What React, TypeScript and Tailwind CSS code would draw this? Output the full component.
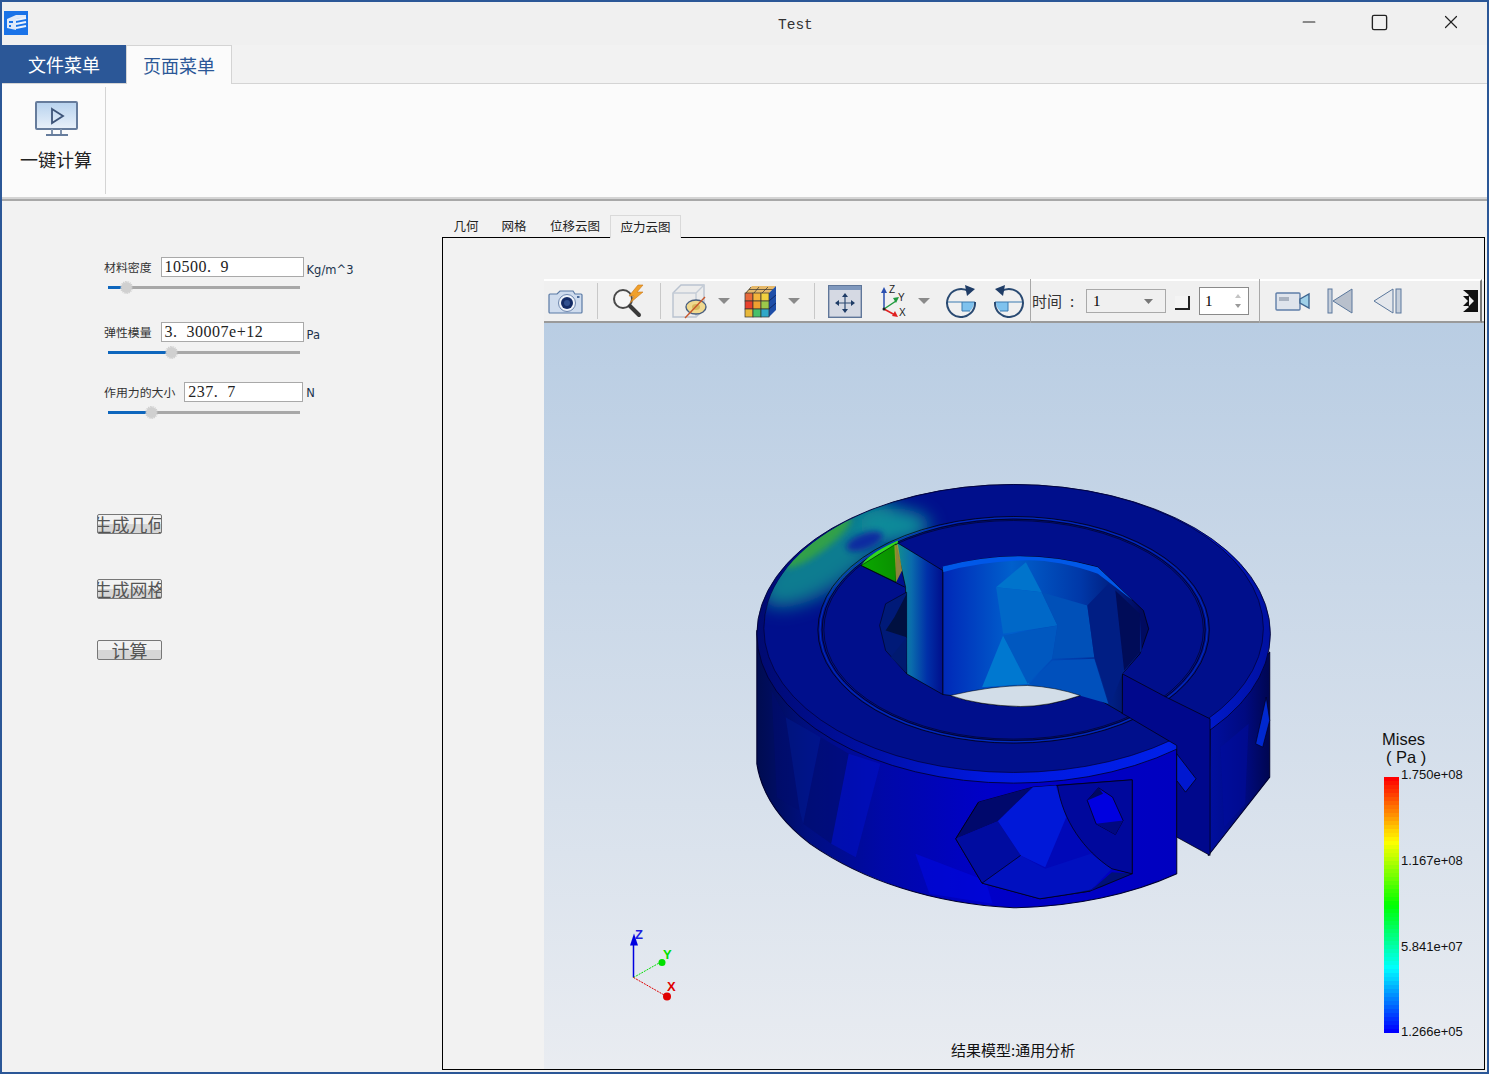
import { ReactNode } from "react";
import { Minus, Square, X } from "lucide-react";

const cjk = "font-['Noto_Sans_CJK_SC','Liberation_Sans',sans-serif]";
const serif = "font-['Liberation_Serif',serif]";

const Slider = ({ pos }: { pos: number }) => (
  <div className="relative ml-[4px] h-[3px] w-[192px] bg-[#a8a8a8]">
    <div className="absolute left-0 top-0 h-[3px] bg-[#0e66bd]" style={{ width: pos }} />
    <div
      className="absolute top-[-4px] h-[11px] w-[11px] rounded-full bg-[#d0d0d0] outline-1 outline-dotted outline-[#c4c4c4]"
      style={{ left: pos - 5 }}
    />
  </div>
);

const Param = ({
  label,
  value,
  unit,
  pos,
  inputWidth,
  gap,
  unitTop,
}: {
  label: string;
  value: string;
  unit: string;
  pos: number;
  inputWidth: string;
  gap: string;
  unitTop: string;
}) => (
  <div>
    <div className="flex h-[20px] items-center">
      <span className={`${cjk} text-[11.9px] text-[#333] whitespace-nowrap`}>{label}</span>
      <div
        className={`${inputWidth} ${gap} flex h-[20px] shrink-0 items-center border border-[#a9a9a9] bg-white pl-[3px] ${serif} text-[16px] tracking-[0.5px] whitespace-pre text-[#222]`}
      >
        {value}
      </div>
      <span className={`${unitTop} relative ml-[3px] font-['DejaVu_Sans',sans-serif] text-[11.5px] text-[#20324c]`}>
        {unit}
      </span>
    </div>
    <div className="mt-[9px]">
      <Slider pos={pos} />
    </div>
  </div>
);

const OldButton = ({ text, className }: { text: string; className: string }) => (
  <div
    className={`${className} ${cjk} flex h-[20px] w-[65px] items-center justify-center overflow-hidden rounded-[2px] border border-[#777] bg-[linear-gradient(#f2f2f2_50%,#d6d6d6_50%)] text-[18px] leading-[18px] whitespace-nowrap text-[#555]`}
  >
    {text}
  </div>
);

const Caret = ({ className = "" }: { className?: string }) => (
  <svg width="12" height="7" viewBox="0 0 12 7" className={className}>
    <path d="M0 0H12L6 6Z" fill="#8a8a8a" />
  </svg>
);

const Sep = ({ className }: { className: string }) => <div className={`${className} h-[36px] w-px bg-[#c8c8c8]`} />;

const CameraIcon = () => (
  <svg width="36" height="28" viewBox="0 0 36 28">
    <path d="M2 7h7l3-3h13l2 3h6a1 1 0 0 1 1 1v17a1 1 0 0 1-1 1H2a1 1 0 0 1-1-1V8a1 1 0 0 1 1-1z" fill="#cfdcee" stroke="#5a7aa5" strokeWidth="1.2" />
    <circle cx="19" cy="16" r="8.5" fill="#eef3fa" stroke="#6d86ad" />
    <circle cx="19" cy="16" r="6" fill="#142c66" />
    <circle cx="19" cy="16" r="3" fill="#30508f" />
    <rect x="29" y="9" width="2.5" height="2" fill="#4a6a9a" />
  </svg>
);

const SearchBoltIcon = () => (
  <svg width="36" height="34" viewBox="0 0 36 34">
    <circle cx="13" cy="15" r="9" fill="#f6f6f6" stroke="#4a4a4a" strokeWidth="2" />
    <path d="M20 22l9 9" stroke="#3a3a3a" strokeWidth="4" strokeLinecap="round" />
    <path d="M28 1l-9 11h5l-4 7 13-11h-6l6-7z" fill="#f0a02c" stroke="#c9781c" strokeWidth=".6" />
  </svg>
);

const CubeEyeIcon = () => (
  <svg width="36" height="36" viewBox="0 0 36 36">
    <path d="M2 10L10 2h23v24l-8 8H2z" fill="#ececec" stroke="#b9c2cf" strokeWidth="1.4" />
    <path d="M2 10h23v24M25 10l8-8" fill="none" stroke="#c4ccd6" strokeWidth="1.4" />
    <ellipse cx="25" cy="24" rx="10" ry="7" fill="#f0d98e" stroke="#4a5f7f" strokeWidth="1.4" />
    <ellipse cx="25" cy="24" rx="4" ry="3" fill="#d7b85c" />
    <path d="M14 35L34 14" stroke="#c8562a" strokeWidth="1.4" />
  </svg>
);

const ColorCubeIcon = () => {
  const front = ["#e86a3a", "#f4b33c", "#f0d040", "#e8402c", "#f0a030", "#9cc84a", "#e8b83a", "#48c06a", "#30a8c8"];
  return (
    <svg width="34" height="34" viewBox="0 0 34 34">
      <path d="M8 2h24l-7 7H1z" fill="#e6b96a" />
      <path d="M7 3l-5 6M15 3l-5 6M24 3l-6 6M5 5.500h24" stroke="#333" strokeWidth=".7" />
      <path d="M25 9l7-7v24l-7 7z" fill="#1e4ea8" />
      <path d="M25 17l7-6M25 25l7-6" stroke="#0e2a66" />
      {front.map((c, i) => (
        <rect key={i} x={1 + (i % 3) * 8} y={9 + Math.floor(i / 3) * 8} width="8" height="8" fill={c} stroke="#333" strokeWidth=".7" />
      ))}
    </svg>
  );
};

const FitIcon = () => (
  <svg width="34" height="33" viewBox="0 0 34 33">
    <rect x=".7" y=".7" width="32.600" height="31.600" fill="#d5d9e3" stroke="#5f7699" strokeWidth="1.4" />
    <rect x="1" y="1" width="32" height="4" fill="#7f98bd" />
    <path d="M17 10v16M9 18h16" stroke="#2c4a72" strokeWidth="1.200" />
    <path d="M17 8l-3 4h6zM17 28l-3-4h6zM7 18l4-3v6zM27 18l-4-3v6z" fill="#1f3c66" />
  </svg>
);

const AxesIcon = () => (
  <svg width="30" height="36" viewBox="0 0 30 36">
    <path d="M6 26V8" stroke="#2a4fb0" strokeWidth="1.500" />
    <path d="M6 4l-3 6h6z" fill="#2a4fb0" />
    <path d="M6 26l12-8" stroke="#1f9a3e" strokeWidth="1.500" />
    <path d="M21 14l-6 1 3 5z" fill="#1f9a3e" />
    <path d="M6 26l11 6" stroke="#e02020" strokeWidth="1.500" />
    <path d="M20 34l-6-1 3-5z" fill="#e02020" />
    <circle cx="6" cy="26" r="1.500" fill="#222" />
    <text x="11" y="10" fontSize="10" fontFamily="Liberation Sans" fill="#222">Z</text>
    <text x="20" y="18" fontSize="10" fontFamily="Liberation Sans" fill="#222">Y</text>
    <text x="21" y="33" fontSize="10" fontFamily="Liberation Sans" fill="#222">X</text>
  </svg>
);

const RotateIcon = ({ flip }: { flip?: boolean }) => (
  <svg width="32" height="34" viewBox="0 0 32 34" className={flip ? "-scale-x-100" : ""}>
    <path d="M17 18h12a12 12 0 0 1-4 9h-8z" fill="#7fc2ee" />
    <path d="M2 18h28M17 18v9h8" fill="none" stroke="#3a7ab0" />
    <path d="M24 7.500A14 14 0 1 0 30 18" fill="none" stroke="#2a4a72" strokeWidth="2" />
    <path d="M20 1l10 4-8 7z" fill="#1f3c66" />
  </svg>
);

const VideoIcon = () => (
  <svg width="36" height="20" viewBox="0 0 36 20">
    <rect x="1" y="2" width="24" height="17" rx="1" fill="#dfe4ec" stroke="#5f7ea8" strokeWidth="1.4" />
    <rect x="4" y="6" width="10" height="4" fill="#a9b2c0" />
    <path d="M25 8l9-5v14l-9-5z" fill="#9fd0e8" stroke="#3d6590" strokeWidth="1.4" />
  </svg>
);

const SkipBackIcon = () => (
  <svg width="26" height="26" viewBox="0 0 26 26">
    <rect x="1" y="1" width="4" height="24" fill="#c6cfdb" stroke="#5a779c" />
    <path d="M25 1v24L6 13z" fill="#b8c0cc" stroke="#5a779c" />
  </svg>
);

const StepBackIcon = () => (
  <svg width="29" height="26" viewBox="0 0 29 26">
    <path d="M20 1v24L1 13z" fill="#e4e7ec" stroke="#5a779c" />
    <rect x="23" y="1" width="5" height="24" fill="#c6cfdb" stroke="#5a779c" />
  </svg>
);

const IconSlot = ({ width, children }: { width: string; children: ReactNode }) => (
  <div className={`${width} flex shrink-0 items-center justify-center`}>{children}</div>
);

const Toolbar = () => (
  <div className="flex h-[44px] items-center border-t-2 border-b-2 border-t-white border-b-[#9a9a9a] bg-[#f0f0f0]">
    <IconSlot width="w-[44px]"><CameraIcon /></IconSlot>
    <Sep className="ml-[9px]" />
    <IconSlot width="w-[60px]"><SearchBoltIcon /></IconSlot>
    <Sep className="ml-[2px]" />
    <IconSlot width="w-[44px] ml-[6px]"><CubeEyeIcon /></IconSlot>
    <Caret className="ml-[7px]" />
    <IconSlot width="w-[36px] ml-[13px]"><ColorCubeIcon /></IconSlot>
    <Caret className="ml-[9px]" />
    <Sep className="ml-[14px]" />
    <IconSlot width="w-[36px] ml-[12px]"><FitIcon /></IconSlot>
    <IconSlot width="w-[36px] ml-[12px]"><AxesIcon /></IconSlot>
    <Caret className="ml-[7px]" />
    <IconSlot width="w-[32px] ml-[15px]"><RotateIcon /></IconSlot>
    <IconSlot width="w-[32px] ml-[16px]"><RotateIcon flip /></IconSlot>
    <div className="ml-[5px] h-[44px] w-px bg-[#a8a8a8]" />
    <span className={`${cjk} ml-[1px] w-[54px] text-[15px] text-[#333]`}>
      时间<span className="ml-[8px]">:</span>
    </span>
    <div className={`${serif} flex h-[24px] w-[80px] items-center justify-between border border-[#a9a9a9] pl-[6px] pr-[12px] text-[15px]`}>
      1
      <svg width="9" height="5" viewBox="0 0 9 5"><path d="M0 0H9L4.500 5Z" fill="#777" /></svg>
    </div>
    <div className="ml-[9px] mt-[4px] h-[14px] w-[15px] border-r-2 border-b-2 border-r-[#222] border-b-[#222] bg-[#f4f4f4]" />
    <div className={`${serif} ml-[9px] flex h-[28px] w-[50px] items-center justify-between border border-[#8a8a8a] bg-white pl-[5px] pr-[6px] text-[15px]`}>
      1
      <svg width="8" height="16" viewBox="0 0 8 16"><path d="M4 1l3 4H1z" fill="#c4c4c4" /><path d="M4 15l3-4H1z" fill="#9a9a9a" /></svg>
    </div>
    <div className="ml-[10px] h-[44px] w-px bg-[#a8a8a8]" />
    <div className="ml-[10px] flex h-[44px] w-[212px] items-center border-t-2 border-r-2 border-b-2 border-t-white border-r-[#777] border-b-[#9a9a9a]">
      <IconSlot width="w-[36px] ml-[5px]"><VideoIcon /></IconSlot>
      <IconSlot width="w-[26px] ml-[16px]"><SkipBackIcon /></IconSlot>
      <IconSlot width="w-[29px] ml-[20px]"><StepBackIcon /></IconSlot>
      <svg width="15" height="22" viewBox="0 0 15 22" className="ml-[61px]">
        <path d="M0 0h15v22H0l6-5-1-1H0l5-5-5-5h5l1-1z" fill="#111" />
        <path d="M6 6l5 5-5 5z" fill="#eee" />
      </svg>
    </div>
  </div>
);

const Model = () => (
  <svg className="absolute inset-0 h-full w-full" viewBox="544 323 940 745">
    <defs>
      <linearGradient id="side" gradientUnits="userSpaceOnUse" x1="48" y1="0" x2="1245" y2="0">
        <stop offset="0" stopColor="#000c50" />
        <stop offset=".12" stopColor="#000f80" />
        <stop offset=".3" stopColor="#0008a8" />
        <stop offset=".55" stopColor="#0000c8" />
        <stop offset="1" stopColor="#0000c0" />
      </linearGradient>
      <linearGradient id="rside" x1="0" y1="0" x2="1" y2="0">
        <stop offset="0" stopColor="#000fa0" />
        <stop offset=".6" stopColor="#000a80" />
        <stop offset="1" stopColor="#000650" />
      </linearGradient>
      <linearGradient id="rim" gradientUnits="userSpaceOnUse" x1="48" y1="0" x2="1510" y2="0">
        <stop offset="0" stopColor="#000a70" />
        <stop offset=".2" stopColor="#000fa0" />
        <stop offset=".45" stopColor="#0018e0" />
        <stop offset=".8" stopColor="#0020e8" />
        <stop offset="1" stopColor="#0010a0" />
      </linearGradient>
      <linearGradient id="bore" gradientUnits="userSpaceOnUse" x1="578" y1="0" x2="1140" y2="0">
        <stop offset="0" stopColor="#0028b8" />
        <stop offset=".35" stopColor="#0060cc" />
        <stop offset=".7" stopColor="#0038a8" />
        <stop offset="1" stopColor="#000a60" />
      </linearGradient>
      <linearGradient id="slot" gradientUnits="userSpaceOnUse" x1="450" y1="0" x2="578" y2="0">
        <stop offset="0" stopColor="#108c90" />
        <stop offset=".3" stopColor="#0a6cac" />
        <stop offset=".65" stopColor="#0030a8" />
        <stop offset="1" stopColor="#000f8c" />
      </linearGradient>
      <linearGradient id="green" gradientUnits="userSpaceOnUse" x1="345" y1="285" x2="445" y2="270">
        <stop offset="0" stopColor="#0aa800" />
        <stop offset="1" stopColor="#0a9000" />
      </linearGradient>
      <clipPath id="face"><ellipse cx="780" cy="474" rx="712" ry="432" /></clipPath>
      <filter id="blur" x="-50%" y="-50%" width="200%" height="200%"><feGaussianBlur stdDeviation="26" /></filter>
      <filter id="soft" x="-50%" y="-50%" width="200%" height="200%"><feGaussianBlur stdDeviation="9" /></filter>
    </defs>

    <g transform="translate(740 470) scale(0.3508 0.3333)" strokeLinejoin="round">
      {/* outer walls */}
      <path d="M48 480V880C60 960 100 1040 200 1120C350 1230 550 1300 780 1312C950 1310 1120 1270 1245 1210V700Z" fill="url(#side)" stroke="#000030" strokeWidth="3" />
      <path d="M1340 770L1510 545V920L1335 1155Z" fill="url(#rside)" stroke="#000030" strokeWidth="3" />
      <path d="M90 660L130 740 170 1020 105 980ZM230 800L310 850 260 1120 180 1060Z" fill="#000c70" opacity=".55" />
      <path d="M130 740L230 800 180 1060 170 1020Z" fill="#001a90" opacity=".5" />
      <path d="M310 850L400 880 330 1160 260 1120Z" fill="#0010c8" opacity=".55" />
      <path d="M500 1150L700 1230 720 1300 540 1270Z" fill="#0008e0" opacity=".6" />
      <path d="M1370 830L1450 760 1440 1000 1380 1070Z" fill="#000ca0" opacity=".5" />
      {/* chamfer + top face */}
      <ellipse cx="780" cy="490" rx="732" ry="448" fill="url(#rim)" stroke="#000030" strokeWidth="2.500" />
      <ellipse cx="780" cy="474" rx="712" ry="432" fill="#000f8c" stroke="#000030" strokeWidth="2" />
      <g clipPath="url(#face)">
        <ellipse cx="250" cy="250" rx="230" ry="95" transform="rotate(-38 250 250)" fill="#0c7c90" filter="url(#blur)" />
        <ellipse cx="440" cy="165" rx="100" ry="50" fill="#108c9a" filter="url(#blur)" />
        <ellipse cx="220" cy="215" rx="120" ry="30" transform="rotate(-38 220 215)" fill="#30a048" filter="url(#soft)" />
        <ellipse cx="355" cy="213" rx="55" ry="24" transform="rotate(-22 355 213)" fill="#0a2ca0" filter="url(#soft)" />
      </g>
      {/* groove */}
      <ellipse cx="780" cy="478" rx="558" ry="340" fill="none" stroke="#000" strokeWidth="2" />
      <ellipse cx="780" cy="478" rx="552" ry="336" fill="none" stroke="#0030c0" strokeWidth="3" />
      <ellipse cx="780" cy="478" rx="546" ry="332" fill="#000f8c" stroke="#000" strokeWidth="2" />
      <ellipse cx="780" cy="478" rx="541" ry="328" fill="none" stroke="#000" strokeWidth="1.500" />
      <path d="M345 285C370 250 410 230 450 210L450 222C410 240 380 260 350 288Z" fill="#30d820" />
      {/* slit block */}
      <path d="M1090 610L1215 680 1340 745V1155L1245 1100V825L1105 738 1088 728Z" fill="#00088c" stroke="#000" strokeWidth="2" />
      <path d="M1245 850L1300 925 1270 965 1245 930Z" fill="#0018d0" stroke="#000" strokeWidth="2" />
      <path d="M1500 680L1470 820 1490 830 1510 750Z" fill="#0028d0" stroke="#000020" strokeWidth="2" />
      {/* bore */}
      <path d="M578 290Q800 225 1020 290L1150 420 1165 475 1140 550 1090 610V728L995 670 970 675Q880 708 800 708Q680 705 600 675L578 672Z" fill="url(#bore)" stroke="#000" strokeWidth="2" />
      <path d="M815 275L860 365 730 350Z" fill="#0074cc" />
      <path d="M730 350L860 365 905 465 750 490Z" fill="#0068c8" />
      <path d="M750 495L825 640 690 650Z" fill="#0078d0" />
      <path d="M905 465L890 565 820 640 750 495Z" fill="#0058c0" />
      <path d="M860 365L990 405 1010 560 890 565 905 465Z" fill="#0050b8" />
      <path d="M890 570L1010 565 1050 700 950 670 825 640Z" fill="#0050bc" />
      <path d="M990 405L1050 340 1140 440 1145 540 1090 610 1055 705 1010 560Z" fill="#001e84" />
      <path d="M1070 360L1140 430 1140 545 1095 600Z" fill="#000c58" />
      <path d="M578 305V288Q800 225 1020 290L1150 420 1120 390 1020 310Q900 265 800 270Q680 275 578 305Z" fill="#0058e8" />
      <path d="M600 675Q720 645 820 645Q900 650 970 675Q880 708 800 708Q680 705 600 675Z" fill="#d2dde8" stroke="#000" strokeWidth="1.500" />
      {/* slot near the hot spot */}
      <path d="M345 285L445 220 445 335Z" fill="url(#green)" stroke="#000" strokeWidth="1.500" />
      <path d="M445 222L472 350 475 610 578 672V300L450 218Z" fill="url(#slot)" stroke="#000" strokeWidth="2" />
      <path d="M440 225L450 222 462 300 445 335Z" fill="#b0a030" opacity=".8" />
      <path d="M475 365L415 400 398 465 415 540 475 610Z" fill="#001a78" stroke="#000" strokeWidth="1.500" />
      <path d="M440 440L475 370V500L415 480Z" fill="#001040" />
      <path d="M475 500V605L430 560Z" fill="#001a70" />
      <path d="M345 285L470 350" stroke="#000" strokeWidth="2" fill="none" />
      {/* cross hole on the front wall */}
      <path d="M680 995L835 950 900 945 1118 928V1210L1050 1190 998 1262 855 1285 690 1238 615 1105Z" fill="#0008b8" stroke="#000" strokeWidth="2" />
      <path d="M680 995L835 950 735 1052 615 1105Z" fill="#00086c" />
      <path d="M835 950L900 945 930 1040 870 1190 800 1155 735 1052Z" fill="#0018d8" />
      <path d="M615 1105L735 1052 800 1155 690 1238Z" fill="#000ca0" />
      <path d="M800 1155L870 1195 1000 1150 1060 1195 998 1262 855 1285 690 1238Z" fill="#0010c0" />
      <path d="M900 1280L998 1262 1060 1205 1118 1210 1030 1250Z" fill="#001078" />
      <path d="M905 945L1118 928V1210L1060 1195C980 1140 920 1050 905 945Z" fill="#00089c" stroke="#000" strokeWidth="2" />
      <path d="M990 990L1022 952 1062 980 1092 1050 1070 1092 1015 1060Z" fill="#0000e0" stroke="#000" strokeWidth="2" />
      <path d="M1015 1060L1092 1050 1070 1092Z" fill="#000880" />
      <path d="M990 990L1022 952 1035 970Z" fill="#000860" />
      <path d="M680 995L615 1105 690 1238 855 1285 998 1262 1118 1210M690 1238L800 1155" fill="none" stroke="#000" strokeWidth="2" />
    </g>

    {/* triad */}
    <path d="M633.500 977V940" stroke="#0000e0" strokeWidth="1.500" />
    <path d="M634 933l-4 12h8z" fill="#0000e0" />
    <path d="M633.500 977L660 962" stroke="#00e000" strokeWidth="1" strokeDasharray="2 1" />
    <circle cx="662" cy="962" r="3.500" fill="#00e000" />
    <path d="M633.500 977L665 995" stroke="#e00000" strokeWidth="1" strokeDasharray="2 1" />
    <circle cx="667" cy="996" r="4" fill="#e00000" />
    <text x="635" y="938" fontSize="13" fontWeight="700" fontFamily="Liberation Sans" fill="#2020e0">Z</text>
    <text x="663" y="958" fontSize="13" fontWeight="700" fontFamily="Liberation Sans" fill="#00e000">Y</text>
    <text x="667" y="990" fontSize="13" fontWeight="700" fontFamily="Liberation Sans" fill="#e00000">X</text>
  </svg>
);

const scaleColor = (i: number, n: number) => `hsl(${Math.round((i / (n - 1)) * 240)} 100% 50%)`;

const Legend = () => (
  <div className="absolute left-[838px] top-[407px] w-[90px]">
    <div className="font-['Liberation_Sans',sans-serif] text-[16.500px] leading-[18px] text-[#111]">Mises</div>
    <div className="ml-[4px] font-['Liberation_Sans',sans-serif] text-[16.500px] leading-[18px] text-[#111]">( Pa )</div>
    <div className="relative ml-[2px] mt-[11px] h-[256px] w-[15px]">
      {Array.from({ length: 64 }).map((_, i) => (
        <div key={i} className="h-[4px] w-[15px]" style={{ background: scaleColor(i, 64) }} />
      ))}
      {[
        ["1.750e+08", "top-[-10px]"],
        ["1.167e+08", "top-[76px]"],
        ["5.841e+07", "top-[162px]"],
        ["1.266e+05", "top-[247px]"],
      ].map(([t, pos]) => (
        <span key={t} className={`${pos} absolute left-[17px] font-['Liberation_Sans',sans-serif] text-[13px] leading-[15px] text-[#111]`}>
          {t}
        </span>
      ))}
    </div>
  </div>
);

export default function App() {
  return (
    <div className="flex h-[1074px] w-[1489px] flex-col overflow-hidden border-2 border-[#2b5797] bg-[#f2f2f2]">
      {/* title bar */}
      <div className="flex h-[43px] shrink-0 items-center bg-[#f0f0f0]">
        <svg width="24" height="24" viewBox="0 0 24 24" className="ml-[2px] mt-[-1px]">
          <rect width="24" height="24" fill="#1a73e8" />
          <path d="M3 8l9-4 10 0v3l-10 1v11l-9-2z" fill="#dfe9f8" />
          <path d="M12 9l10-2M12 13l10-2M12 17l10-2" stroke="#eef4fc" strokeWidth="2" />
          <path d="M5 10h4v2H5zM5 14h2v2H5z" fill="#1a73e8" />
        </svg>
        <span className="ml-[750px] mt-[5px] font-['Liberation_Mono',monospace] text-[14.500px] text-[#333]">Test</span>
        <div className="ml-auto flex items-center">
          <Minus size={20} strokeWidth={1.400} className="mr-[51px] mb-[4px] text-[#222]" />
          <Square size={19} strokeWidth={1.700} className="mr-[51px] mb-[3px] text-[#222]" />
          <X size={22} strokeWidth={1.300} className="mr-[25px] mb-[3px] text-[#222]" />
        </div>
      </div>
      {/* ribbon tabs */}
      <div className={`${cjk} flex h-[39px] shrink-0 border-b border-[#d4d4d4] text-[18px]`}>
        <div className="flex w-[124px] items-center justify-center bg-[#2b5797] text-white">文件菜单</div>
        <div className="z-10 flex h-[39px] w-[106px] items-center justify-center border-x border-t border-[#d4d4d4] bg-[#fbfbfb] text-[#2b5797]">
          页面菜单
        </div>
      </div>
      {/* ribbon */}
      <div className="flex h-[115px] shrink-0 items-stretch border-b-2 border-[#d4d4d4] bg-[#fbfbfb] py-[3px]">
        <div className="flex w-[104px] flex-col items-center border-r border-[#d4d4d4]">
          <svg width="44" height="36" viewBox="0 0 44 36" className="ml-[6px] mt-[14px]">
            <defs>
              <linearGradient id="scr" x1="0" y1="0" x2="0" y2="1">
                <stop offset="0" stopColor="#b7d2ee" />
                <stop offset="1" stopColor="#e9f1fa" />
              </linearGradient>
            </defs>
            <rect x="1" y="1" width="41" height="27" rx="1" fill="url(#scr)" stroke="#667c9c" strokeWidth="2" />
            <path d="M17 8l11 7-11 7z" fill="none" stroke="#3d5479" strokeWidth="1.800" />
            <path d="M17 28v5M26 28v5" stroke="#8093ad" strokeWidth="2" />
            <rect x="11" y="33" width="22" height="2" fill="#667c9c" />
          </svg>
          <span className={`${cjk} ml-[5px] mt-[10px] text-[18px] leading-[24px] text-[#222]`}>一键计算</span>
        </div>
      </div>
      {/* body */}
      <div className="flex min-h-0 flex-1 border-t-2 border-[#a8a8a8]">
        <div className="w-[440px] shrink-0 pl-[102px] pt-[56px]">
          <Param label="材料密度" value="10500.  9" unit="Kg/m^3" pos={18} inputWidth="w-[143px]" gap="ml-[9px]" unitTop="top-[4px]" />
          <div className="mt-[33px]">
            <Param label="弹性模量" value="3.  30007e+12" unit="Pa" pos={63} inputWidth="w-[143px]" gap="ml-[9px]" unitTop="top-[4px]" />
          </div>
          <div className="mt-[28px]">
            <Param label="作用力的大小" value="237.  7" unit="N" pos={43} inputWidth="w-[119px]" gap="ml-[9px]" unitTop="top-[2px]" />
          </div>
          <OldButton text="生成几何" className="ml-[-7px] mt-[100px]" />
          <OldButton text="生成网格" className="ml-[-7px] mt-[45px]" />
          <OldButton text="计算" className="ml-[-7px] mt-[41px]" />
        </div>
        <div className="flex min-w-0 flex-1 flex-col pr-[2px] pb-[2px] pt-[13px]">
          <div className={`${cjk} flex h-[23px] shrink-0 items-end text-[12.500px] text-[#222]`}>
            <span className="flex h-[21px] w-[48px] items-center justify-center">几何</span>
            <span className="flex h-[21px] w-[48px] items-center justify-center">网格</span>
            <span className="ml-[1px] flex h-[21px] w-[72px] items-center justify-center">位移云图</span>
            <span className="z-10 ml-[-1px] mb-[-1px] flex h-[23px] w-[71px] items-center justify-center border-x border-t border-[#d9d9d9] bg-[#f2f2f2]">
              应力云图
            </span>
          </div>
          <div className="flex min-h-0 flex-1 flex-col border border-black pl-[101px] pt-[41px]">
            <Toolbar />
            <div className="relative flex-1 bg-[linear-gradient(#b9cde3,#e9ecf1)]">
              <Model />
              <Legend />
              <div className={`${cjk} absolute bottom-[10px] left-[407px] text-[15px] leading-[18px] text-[#111]`}>
                结果模型:通用分析
              </div>
            </div>
          </div>
        </div>
      </div>
    </div>
  );
}
